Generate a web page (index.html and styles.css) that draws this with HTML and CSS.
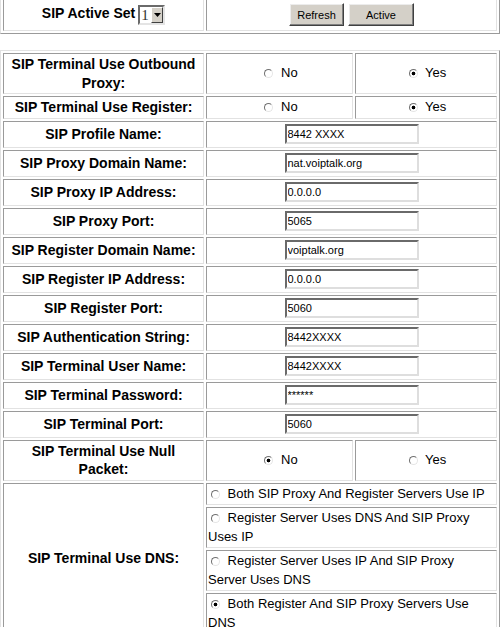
FILE: index.html
```html
<!DOCTYPE html>
<html lang="en">
<head>
<meta charset="utf-8">
<title>SIP Settings</title>
<link rel="stylesheet" href="styles.css">
</head>
<body>
<table class="grid top-set">
  <tr>
    <td class="label c-label">SIP Active Set<span class="select"><span class="select-val">1</span><span class="select-btn"><svg width="7" height="4" viewBox="0 0 7 4"><path d="M0 0h7L3.5 4z" fill="#000"/></svg></span></span></td>
    <td class="c-wide actions"><div class="btns"><button class="btn" type="button">Refresh</button><button class="btn btn-wide" type="button">Active</button></div></td>
  </tr>
</table>

<table class="grid settings">
  <tr>
    <td class="label c-label">SIP Terminal Use Outbound Proxy:</td>
    <td class="choice c-no"><label><input class="radio" type="radio" name="obp"> No</label></td>
    <td class="choice c-yes"><label><input class="radio" type="radio" name="obp" checked> Yes</label></td>
  </tr>
  <tr>
    <td class="label">SIP Terminal Use Register:</td>
    <td class="choice"><label><input class="radio" type="radio" name="reg"> No</label></td>
    <td class="choice"><label><input class="radio" type="radio" name="reg" checked> Yes</label></td>
  </tr>
  <tr class="in">
    <td class="label">SIP Profile Name:</td>
    <td class="field" colspan="2"><input class="text" type="text" value="8442 XXXX"></td>
  </tr>
  <tr class="in">
    <td class="label">SIP Proxy Domain Name:</td>
    <td class="field" colspan="2"><input class="text" type="text" value="nat.voiptalk.org"></td>
  </tr>
  <tr class="in">
    <td class="label">SIP Proxy IP Address:</td>
    <td class="field" colspan="2"><input class="text" type="text" value="0.0.0.0"></td>
  </tr>
  <tr class="in">
    <td class="label">SIP Proxy Port:</td>
    <td class="field" colspan="2"><input class="text" type="text" value="5065"></td>
  </tr>
  <tr class="in">
    <td class="label">SIP Register Domain Name:</td>
    <td class="field" colspan="2"><input class="text" type="text" value="voiptalk.org"></td>
  </tr>
  <tr class="in">
    <td class="label">SIP Register IP Address:</td>
    <td class="field" colspan="2"><input class="text" type="text" value="0.0.0.0"></td>
  </tr>
  <tr class="in">
    <td class="label">SIP Register Port:</td>
    <td class="field" colspan="2"><input class="text" type="text" value="5060"></td>
  </tr>
  <tr class="in">
    <td class="label">SIP Authentication String:</td>
    <td class="field" colspan="2"><input class="text" type="text" value="8442XXXX"></td>
  </tr>
  <tr class="in">
    <td class="label">SIP Terminal User Name:</td>
    <td class="field" colspan="2"><input class="text" type="text" value="8442XXXX"></td>
  </tr>
  <tr class="in">
    <td class="label">SIP Terminal Password:</td>
    <td class="field" colspan="2"><input class="text" type="text" value="******"></td>
  </tr>
  <tr class="in">
    <td class="label">SIP Terminal Port:</td>
    <td class="field" colspan="2"><input class="text" type="text" value="5060"></td>
  </tr>
  <tr>
    <td class="label">SIP Terminal Use Null Packet:</td>
    <td class="choice"><label><input class="radio" type="radio" name="null" checked> No</label></td>
    <td class="choice"><label><input class="radio" type="radio" name="null"> Yes</label></td>
  </tr>
  <tr>
    <td class="label" rowspan="4">SIP Terminal Use DNS:</td>
    <td class="opt" colspan="2"><label><input class="radio" type="radio" name="dns"> Both SIP Proxy And Register Servers Use IP</label></td>
  </tr>
  <tr>
    <td class="opt" colspan="2"><label><input class="radio" type="radio" name="dns"> Register Server Uses DNS And SIP Proxy Uses IP</label></td>
  </tr>
  <tr>
    <td class="opt" colspan="2"><label><input class="radio" type="radio" name="dns"> Register Server Uses IP And SIP Proxy Server Uses DNS</label></td>
  </tr>
  <tr>
    <td class="opt" colspan="2"><label><input class="radio" type="radio" name="dns" checked> Both Register And SIP Proxy Servers Use DNS</label></td>
  </tr>
</table>
</body>
</html>
```

FILE: styles.css
```css
html {
  overflow: hidden;
}

body {
  margin: 0;
  font-family: "Liberation Sans", Arial, sans-serif;
  color: #000;
  background: #fff;
}

.grid {
  width: 500px;
  table-layout: fixed;
  border-collapse: separate;
  border-spacing: 2px;
  border: 1px solid;
  border-color: #e2e2e2 #9a9a9a #9a9a9a #e2e2e2;
}

.grid td {
  box-sizing: border-box;
  border: 1px solid;
  border-color: #9a9a9a #e2e2e2 #e2e2e2 #9a9a9a;
  padding: 1px;
  vertical-align: middle;
}

.top-set {
  margin-top: -5px;
}

.top-set td {
  height: 33px;
}

.settings {
  margin-top: 16px;
}

.c-label { width: 201px; }
.c-no { width: 147px; }
.c-yes { width: 142px; }
.c-wide { width: 291px; }

.label {
  font-size: 14px;
  font-weight: bold;
  line-height: 18.5px;
  text-align: center;
}

/* select look-alike */
.select {
  display: inline-flex;
  vertical-align: middle;
  box-sizing: border-box;
  width: 27px;
  height: 20px;
  margin-left: 3px;
  border: 2px solid;
  border-color: #6a6a6a #e4e4e4 #e4e4e4 #6a6a6a;
  background: #fff;
}

.select-val {
  width: 11px;
  padding-left: 1px;
  box-sizing: border-box;
  font-family: "Liberation Serif", "Times New Roman", serif;
  font-weight: normal;
  font-size: 15px;
  line-height: 16px;
  color: #333;
  text-align: left;
}

.select-btn {
  box-sizing: border-box;
  width: 12px;
  height: 16px;
  display: flex;
  align-items: center;
  justify-content: center;
  background: #d4d0c8;
  border: 1px solid;
  border-color: #fff #404040 #404040 #fff;
}

/* buttons */
.btns {
  display: flex;
  justify-content: center;
  gap: 4px;
}

.btn {
  box-sizing: border-box;
  width: 55px;
  height: 23px;
  margin: 0;
  padding: 0;
  font: 11px "Liberation Sans", Arial, sans-serif;
  color: #000;
  background: #d4d0c8;
  border: 1px solid;
  border-color: #fff #404040 #404040 #fff;
  box-shadow: inset -1px -1px #808080, inset 1px 1px #ececec;
}

.btn-wide {
  width: 66px;
}

/* radio choices */
.choice {
  font-size: 13px;
  line-height: 18.5px;
  text-align: center;
}

.opt {
  font-size: 13px;
  line-height: 18.5px;
  text-align: left;
}

.radio {
  -webkit-appearance: none;
  appearance: none;
  box-sizing: border-box;
  width: 9px;
  height: 9px;
  margin: 0 4px 0 3px;
  border: 1px solid;
  border-color: #707070 #e6e6e6 #e6e6e6 #707070;
  border-radius: 50%;
  background: #fff;
  vertical-align: -1px;
}

.radio:checked {
  background: radial-gradient(circle, #000 0 1.5px, #fff 2.2px);
}

/* text inputs */
.in td {
  height: 27px;
}

.field {
  text-align: center;
}

.text {
  box-sizing: border-box;
  width: 134px;
  height: 20px;
  margin: 0;
  padding: 0 1px;
  font: 11px "Liberation Sans", Arial, sans-serif;
  color: #000;
  background: #fff;
  border: 2px solid;
  border-color: #6a6a6a #dedede #dedede #6a6a6a;
  vertical-align: middle;
}
```
